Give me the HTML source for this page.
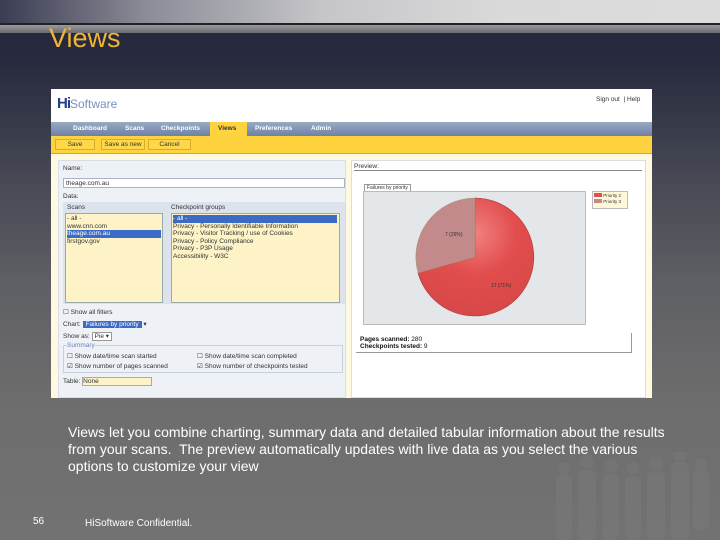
<!DOCTYPE html>
<html><head><meta charset="utf-8"><style>
*{margin:0;padding:0;box-sizing:border-box}
body{width:720px;height:540px;overflow:hidden;position:relative;font-family:"Liberation Sans",sans-serif;background:linear-gradient(#272a3e 0px,#272a3e 60px,#444652 170px,#5e5f64 280px,#6d6d6d 400px,#727272 540px)}
.abs{position:absolute}
.top{left:0;top:0;width:720px;height:23px;background:linear-gradient(90deg,#3a3c52,#8a8b96 20%,#c6c6ca 45%,#dadada 70%,#dcdcdc)}
.ln{left:0;top:23px;width:720px;height:2px;background:#222}
.gb{left:0;top:25px;width:720px;height:8px;background:linear-gradient(#9a9a9e,#6a6b72)}
.title{left:49px;top:23px;color:#f2b531;font-size:27px}
.shot{left:51px;top:89px;width:601px;height:309px;background:#fff9e2;overflow:hidden;font-size:6.5px;color:#333}
.nav{left:0;top:33px;width:601px;height:14px;background:linear-gradient(#9aaac4,#6d81a6);}
.nav span{position:absolute;top:3px;color:#fff;font-weight:bold;font-size:6.5px}
.tb{left:0;top:47px;width:601px;height:18px;background:#fed33d;border-bottom:1px solid #d8a820}
.btn{position:absolute;top:3px;height:11px;border:1px solid #d9ac2a;background:#fed84a;font-size:6.5px;text-align:center;line-height:9px}
.lp{left:7px;top:71px;width:288px;height:238px;background:#eef1f5;border:1px solid #d8dde6}
.inp{background:#fff;border:1px solid #a9b4c3}
.txt{position:absolute;font-size:6.5px;color:#333;white-space:nowrap}
.foot{color:#fff;font-size:14px;line-height:17px}
</style></head><body>
<div class="abs top"></div><div class="abs ln"></div><div class="abs gb"></div>
<div class="abs title">Views</div>

<div class="abs shot">
 <div class="abs" style="left:0;top:0;width:601px;height:33px;background:#fff"></div>
 <div class="abs" style="left:6px;top:6px;font-size:15px;font-weight:bold;color:#233e8a;letter-spacing:-1px">Hi<span style="font-weight:normal;color:#7a90c0;font-size:12px;letter-spacing:0">Software</span></div>
 <div class="abs" style="left:545px;top:7px;font-size:6.5px;color:#333">Sign out &nbsp;| Help</div>
 <div class="abs nav">
  <span style="left:22px">Dashboard</span><span style="left:74px">Scans</span><span style="left:110px">Checkpoints</span>
  <span style="left:159px;top:0;width:37px;height:14px;background:#fed33d;color:#333;padding:3px 0 0 8px">Views</span>
  <span style="left:204px">Preferences</span><span style="left:260px">Admin</span>
 </div>
 <div class="abs tb">
  <div class="btn" style="left:4px;width:40px">Save</div>
  <div class="btn" style="left:50px;width:44px">Save as new</div>
  <div class="btn" style="left:97px;width:43px">Cancel</div>
 </div>
 <div class="abs lp">
  <div class="txt" style="left:4px;top:4px">Name:</div>
  <div class="abs inp" style="left:4px;top:17px;width:282px;height:10px"><div class="txt" style="left:2px;top:1px">theage.com.au</div></div>
  <div class="txt" style="left:4px;top:32px">Data:</div>
  <div class="abs" style="left:4px;top:41px;width:282px;height:102px;background:#dde3ec"></div>
  <div class="txt" style="left:8px;top:43px">Scans</div>
  <div class="txt" style="left:112px;top:43px">Checkpoint groups</div>
  <div class="abs" style="left:6px;top:52px;width:98px;height:90px;background:#fdf3c7;border:1px solid #9aa"></div>
  <div class="txt" style="left:8px;top:54px;line-height:7.5px">- all -<br>www.cnn.com<br><span style="background:#3b6bc4;color:#fff;display:inline-block;width:94px">theage.com.au</span><br>firstgov.gov</div>
  <div class="abs" style="left:112px;top:52px;width:169px;height:90px;background:#fdf3c7;border:1px solid #9aa"></div>
  <div class="txt" style="left:114px;top:54px;line-height:7.5px"><span style="background:#3b6bc4;color:#fff;display:inline-block;width:164px">- all -</span><br>Privacy - Personally Identifiable Information<br>Privacy - Visitor Tracking / use of Cookies<br>Privacy - Policy Compliance<br>Privacy - P3P Usage<br>Accessibility - W3C</div>
  <div class="txt" style="left:4px;top:147px">☐ Show all filters</div>
  <div class="txt" style="left:4px;top:159px">Chart: <span style="background:#3b6bc4;color:#fff;padding:0 3px">Failures by priority</span> ▾</div>
  <div class="txt" style="left:4px;top:171px">Show as: <span style="background:#fff;border:1px solid #999;padding:0 2px">Pie ▾</span></div>
  <div class="abs" style="left:4px;top:184px;width:280px;height:28px;border:1px solid #c8d0dc"></div>
  <div class="txt" style="left:8px;top:181px;color:#6a85b8;background:#eef1f5">Summary</div>
  <div class="txt" style="left:8px;top:191px">☐ Show date/time scan started</div>
  <div class="txt" style="left:138px;top:191px">☐ Show date/time scan completed</div>
  <div class="txt" style="left:8px;top:201px">☑ Show number of pages scanned</div>
  <div class="txt" style="left:138px;top:201px">☑ Show number of checkpoints tested</div>
  <div class="txt" style="left:4px;top:216px">Table: <span style="display:inline-block;width:70px;background:#fdf3c7;border:1px solid #aaa">None</span></div>
 </div>
 <div class="abs" style="left:300px;top:71px;width:295px;height:238px;background:#fff;border:1px solid #ddd"></div>
 <div class="txt" style="left:303px;top:74px">Preview:</div>
 <div class="abs" style="left:303px;top:81px;width:288px;height:1px;background:#888"></div>
 <div class="txt" style="left:313px;top:95px;font-size:5px;border:1px solid #999;border-bottom:0;padding:0 2px;background:#fff">Failures by priority</div>
 <div class="abs" style="left:312px;top:102px;width:223px;height:134px;background:#e4e7ea;border:1px solid #bbb"></div>
 <svg class="abs" style="left:312px;top:102px" width="223" height="134">
  <defs><radialGradient id="g" cx="50%" cy="30%" r="70%"><stop offset="0" stop-color="#f08080"/><stop offset=".5" stop-color="#e24d4d"/><stop offset="1" stop-color="#d84848"/></radialGradient></defs>
  <path d="M112,7 A59,59 0 1 1 55,82 L112,66 Z" fill="url(#g)" stroke="#b03a3a" stroke-width=".6"/>
  <path d="M55,82 A59,59 0 0 1 112,7 L112,66 Z" fill="#c28a8a" stroke="#996" stroke-width=".4"/>
  <text x="82" y="45" font-size="5" fill="#333" font-family="Liberation Sans">7 (29%)</text>
  <text x="128" y="96" font-size="5" fill="#333" font-family="Liberation Sans">17 (71%)</text>
 </svg>
 <div class="abs" style="left:541px;top:102px;width:36px;height:18px;background:#fff8d8;border:1px solid #bbb"></div>
 <div class="txt" style="left:543px;top:104px;font-size:4.5px;line-height:6px"><span style="display:inline-block;width:8px;height:4px;background:#e05050"></span> Priority 2<br><span style="display:inline-block;width:8px;height:4px;background:#c28a8a"></span> Priority 3</div>
 <div class="abs" style="left:305px;top:244px;width:276px;height:20px;border-right:1px solid #999;border-bottom:1px solid #999;background:#fff"></div>
 <div class="txt" style="left:309px;top:247px;line-height:7px;color:#111"><b>Pages scanned:</b> 280<br><b>Checkpoints tested:</b> 9</div>
</div>

<svg class="abs" style="left:548px;top:452px" width="172" height="88">
 <g fill="#7f7f7f" opacity=".35">
  <rect x="8" y="22" width="16" height="66" rx="6"/><circle cx="16" cy="16" r="6"/>
  <rect x="30" y="18" width="18" height="70" rx="6"/><circle cx="39" cy="10" r="7"/>
  <rect x="55" y="22" width="16" height="66" rx="6"/><circle cx="63" cy="14" r="7"/>
  <rect x="77" y="24" width="16" height="64" rx="6"/><circle cx="85" cy="16" r="6"/>
  <rect x="99" y="20" width="18" height="68" rx="6"/><circle cx="108" cy="12" r="7"/>
  <rect x="123" y="10" width="18" height="78" rx="6"/><circle cx="132" cy="2" r="7"/>
  <rect x="145" y="18" width="16" height="60" rx="6"/><circle cx="153" cy="12" r="6"/>
 </g>
</svg>
<div class="abs foot" style="left:68px;top:424px">Views let you combine charting, summary data and detailed tabular information about the results<br>from your scans.&nbsp; The preview automatically updates with live data as you select the various<br>options to customize your view</div>
<div class="abs" style="left:33px;top:516px;color:#fff;font-size:10px">56</div>
<div class="abs" style="left:85px;top:518px;color:#fff;font-size:10px">HiSoftware Confidential.</div>
</body></html>
